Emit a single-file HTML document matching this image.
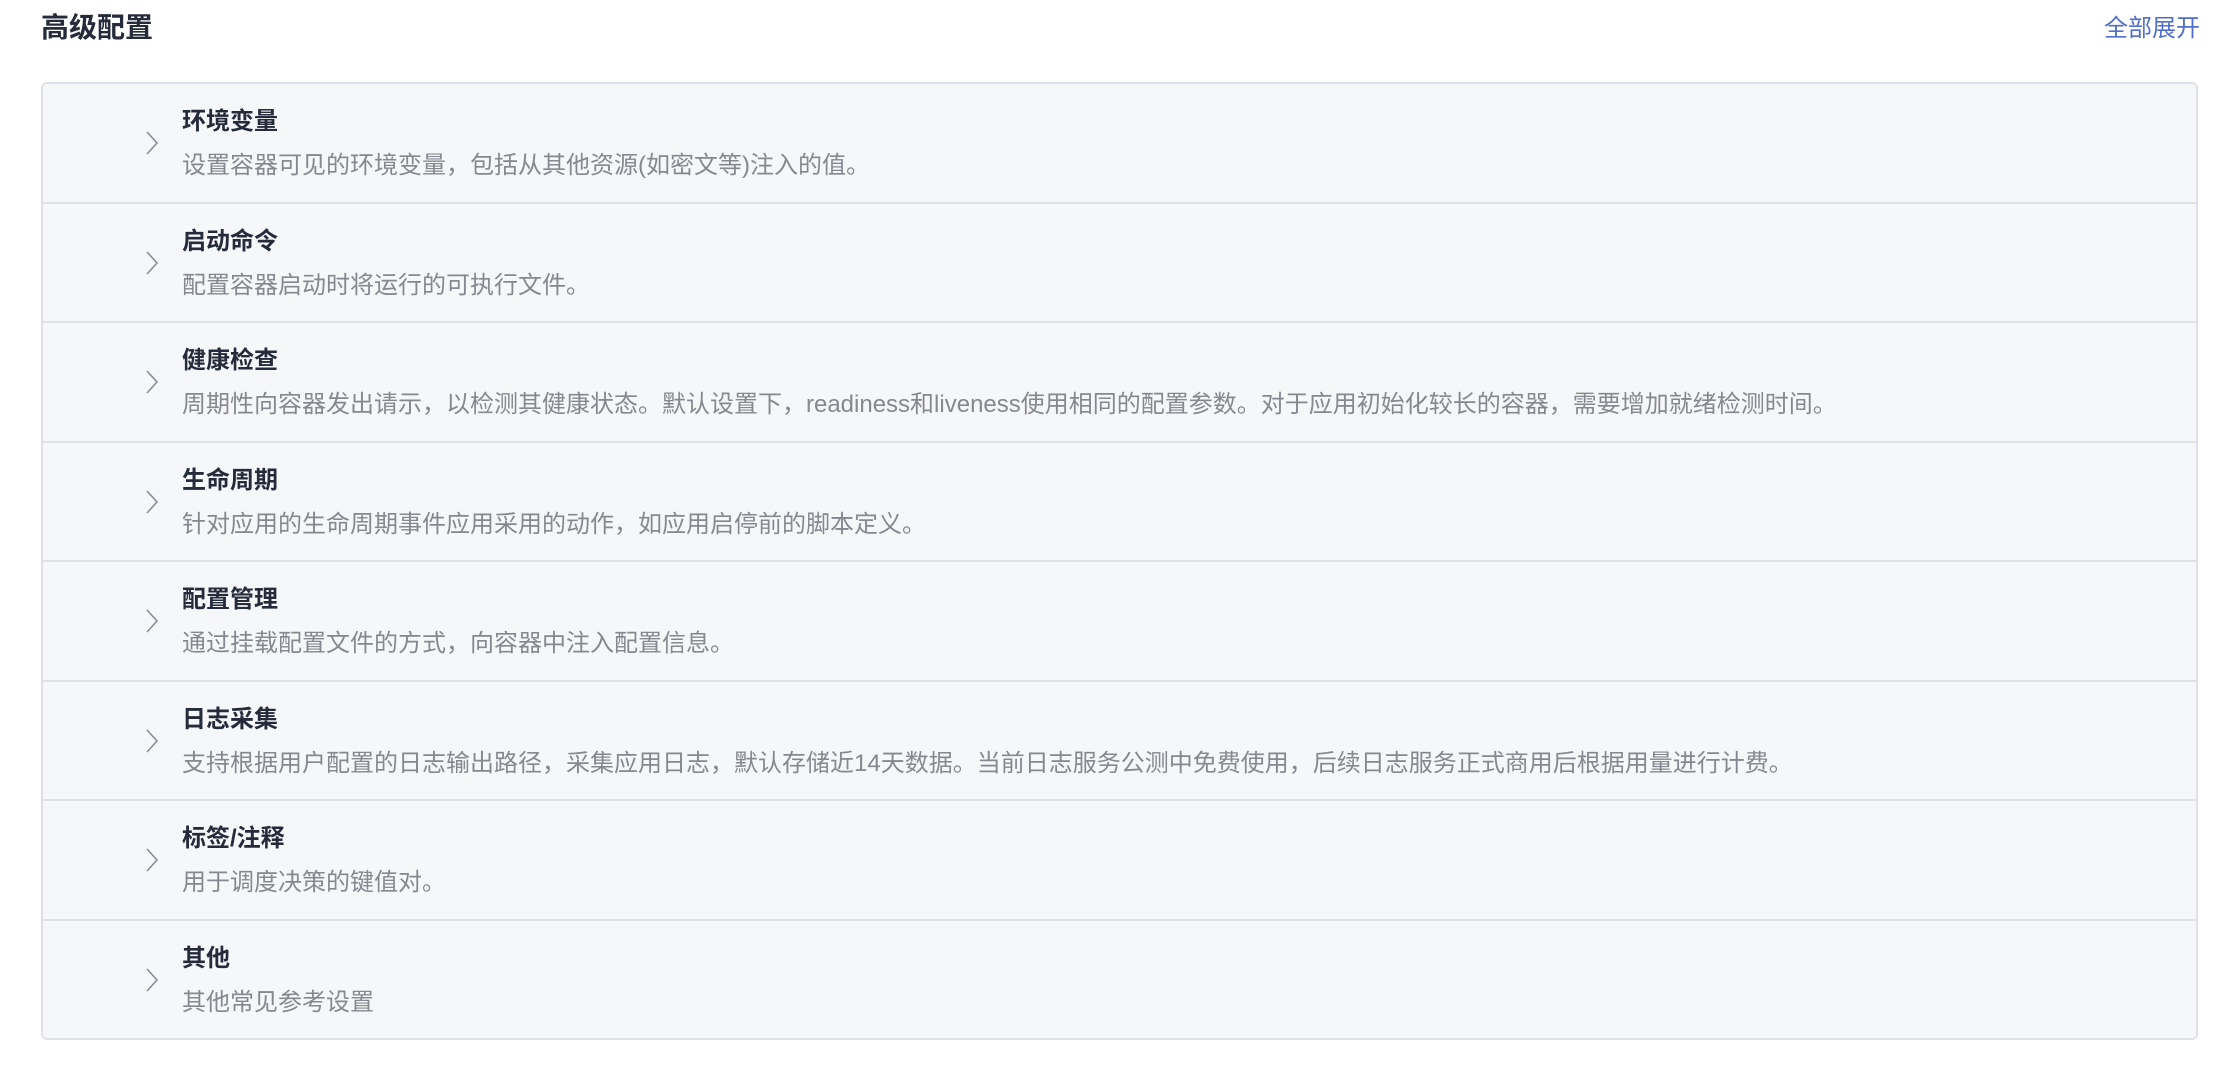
<!DOCTYPE html>
<html><head><meta charset="utf-8"><style>
body{margin:0;width:2223px;height:1068px;background:#fff;font-family:"Liberation Sans","Noto Sans CJK SC",sans-serif;position:relative;overflow:hidden}
.h{position:absolute;left:41px;top:8px;font-size:28px;font-weight:bold;color:#252b3a;line-height:40px}
.a{position:absolute;right:23px;top:12px;font-size:24px;color:#526ecc;line-height:34px}
.box{position:absolute;left:41px;top:82px;width:2153px;border:2px solid #dfe1e6;border-radius:6px;background:#f6f7f9}
.r{height:117.5px;position:relative;border-top:2px solid #dfe1e6}
.r:first-child{border-top:none}
.t{position:absolute;left:139px;top:21px;font-size:24px;font-weight:bold;color:#252b3a;line-height:34px}
.d{position:absolute;left:139px;top:65px;font-size:24px;color:#85888f;line-height:34px;white-space:nowrap}
.c{position:absolute;left:101px;top:46px}
</style></head><body>
<div class="h">高级配置</div>
<div class="a">全部展开</div>
<div class="box">
<div class="r"><svg class="c" width="16" height="26"><path d="M3 2L13 13L3 24" fill="none" stroke="#8a8e99" stroke-width="1.6"/></svg><div class="t">环境变量</div><div class="d">设置容器可见的环境变量，包括从其他资源(如密文等)注入的值。</div></div>
<div class="r"><svg class="c" width="16" height="26"><path d="M3 2L13 13L3 24" fill="none" stroke="#8a8e99" stroke-width="1.6"/></svg><div class="t">启动命令</div><div class="d">配置容器启动时将运行的可执行文件。</div></div>
<div class="r"><svg class="c" width="16" height="26"><path d="M3 2L13 13L3 24" fill="none" stroke="#8a8e99" stroke-width="1.6"/></svg><div class="t">健康检查</div><div class="d">周期性向容器发出请示，以检测其健康状态。默认设置下，readiness和liveness使用相同的配置参数。对于应用初始化较长的容器，需要增加就绪检测时间。</div></div>
<div class="r"><svg class="c" width="16" height="26"><path d="M3 2L13 13L3 24" fill="none" stroke="#8a8e99" stroke-width="1.6"/></svg><div class="t">生命周期</div><div class="d">针对应用的生命周期事件应用采用的动作，如应用启停前的脚本定义。</div></div>
<div class="r"><svg class="c" width="16" height="26"><path d="M3 2L13 13L3 24" fill="none" stroke="#8a8e99" stroke-width="1.6"/></svg><div class="t">配置管理</div><div class="d">通过挂载配置文件的方式，向容器中注入配置信息。</div></div>
<div class="r"><svg class="c" width="16" height="26"><path d="M3 2L13 13L3 24" fill="none" stroke="#8a8e99" stroke-width="1.6"/></svg><div class="t">日志采集</div><div class="d">支持根据用户配置的日志输出路径，采集应用日志，默认存储近14天数据。当前日志服务公测中免费使用，后续日志服务正式商用后根据用量进行计费。</div></div>
<div class="r"><svg class="c" width="16" height="26"><path d="M3 2L13 13L3 24" fill="none" stroke="#8a8e99" stroke-width="1.6"/></svg><div class="t">标签/注释</div><div class="d">用于调度决策的键值对。</div></div>
<div class="r"><svg class="c" width="16" height="26"><path d="M3 2L13 13L3 24" fill="none" stroke="#8a8e99" stroke-width="1.6"/></svg><div class="t">其他</div><div class="d">其他常见参考设置</div></div>
</div>
</body></html>
